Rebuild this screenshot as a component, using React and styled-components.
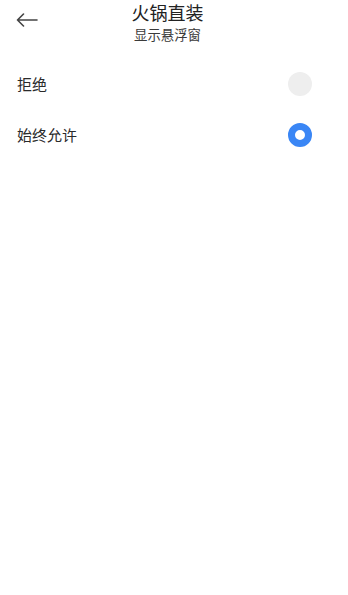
import React, { useState } from 'react';
import styled, { createGlobalStyle } from 'styled-components';

const GlobalStyle = createGlobalStyle`
  html, body {
    margin: 0;
    padding: 0;
    background: #ffffff;
    font-family: "Noto Sans CJK SC", "Noto Sans", sans-serif;
  }
`;

const Page = styled.div`
  width: 348px;
  min-height: 595px;
  background: #ffffff;
`;

const Header = styled.div`
  position: relative;
  display: flex;
  flex-direction: column;
  align-items: center;
  padding: 0 13px 0 0;
  height: 48px;
`;

const BackButton = styled.button`
  position: absolute;
  left: 14px;
  top: 9px;
  width: 26px;
  height: 22px;
  padding: 0;
  border: none;
  background: none;
  display: flex;
  align-items: center;
  justify-content: center;
  cursor: pointer;
`;

const Title = styled.div`
  font-size: 18px;
  line-height: 25px;
  color: #222222;
`;

const Subtitle = styled.div`
  font-size: 13.4px;
  line-height: 18px;
  color: #3a3a3a;
`;

const List = styled.div`
  display: flex;
  flex-direction: column;
  padding-top: 10px;
`;

const Row = styled.div`
  display: flex;
  align-items: center;
  justify-content: space-between;
  height: 51px;
  padding: 0 36px 0 17px;
  cursor: pointer;
`;

const Label = styled.span`
  font-size: 15px;
  color: #2a2a2a;
`;

const Radio = styled.span`
  width: 24px;
  height: 24px;
  border-radius: 50%;
  box-sizing: border-box;
  background: ${p => (p.$checked ? '#ffffff' : '#eeeeee')};
  border: ${p => (p.$checked ? '7px solid #3a86f5' : 'none')};
`;

const options = ['拒绝', '始终允许'];

const App = () => {
  const [selected, setSelected] = useState(1);

  return (
    <Page>
      <GlobalStyle />
      <Header>
        <BackButton>
          <svg width="22" height="14" viewBox="0 0 22 14" fill="none" stroke="#444" strokeWidth="1.6" strokeLinecap="round" strokeLinejoin="round">
            <path d="M21 7H1.5M7.5 1L1.5 7l6 6" />
          </svg>
        </BackButton>
        <Title>火锅直装</Title>
        <Subtitle>显示悬浮窗</Subtitle>
      </Header>
      <List>
        {options.map((o, i) => (
          <Row key={o} onClick={() => setSelected(i)}>
            <Label>{o}</Label>
            <Radio $checked={selected === i} />
          </Row>
        ))}
      </List>
    </Page>
  );
};

export default App;
